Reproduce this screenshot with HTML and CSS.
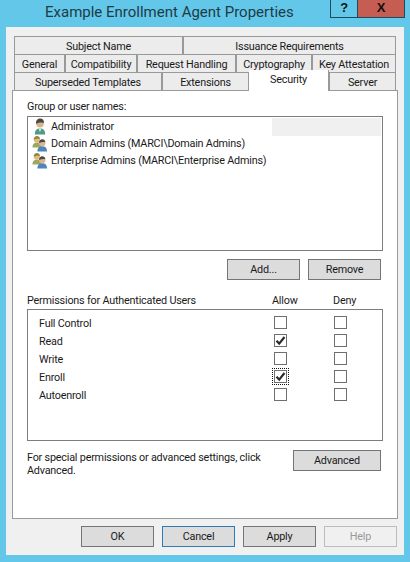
FILE: index.html
```html
<!DOCTYPE html>
<html lang="en">
<head>
<meta charset="utf-8">
<title>Example Enrollment Agent Properties</title>
<link rel="stylesheet" href="styles.css">
</head>
<body>
<svg class="defs" width="0" height="0" aria-hidden="true">
  <defs>
    <symbol id="user" viewBox="0 0 16 18">
      <path d="M2.500 17.500c0-4.500 2-6.500 5.500-6.500s5.500 2 5.500 6.500z" fill="#4e9a86"/>
      <path d="M6.500 11h3L8 15z" fill="#e8e8e0"/>
      <circle cx="8" cy="6" r="4" fill="#d9b38c"/>
      <path d="M3.800 6C3.400 2.500 5.800.6 8.300.6c2.500 0 4.300 1.900 3.900 4.800C10.800 4.300 7 4.600 3.800 6z" fill="#4a4a42"/>
    </symbol>
    <symbol id="group" viewBox="0 0 18 18">
      <path d="M.5 13.500c0-3.700 1.700-5.300 5-5.300s5 1.600 5 5.300z" fill="#9aa860"/>
      <circle cx="5.500" cy="4.800" r="3.500" fill="#e2bb84"/>
      <path d="M2 4.800C1.700 1.900 3.600.5 5.700.5c2 0 3.500 1.500 3.200 3.800C7.700 3.400 5 3.600 2 4.800z" fill="#8f8a3c"/>
      <path d="M6 18c0-3.900 1.900-5.800 5.500-5.800S17 14.100 17 18z" fill="#4f86b8"/>
      <circle cx="11.500" cy="8.500" r="3.600" fill="#e0b48c"/>
      <path d="M8 8.500c-.3-2.900 1.500-4.300 3.600-4.300s3.600 1.500 3.300 3.800c-1.200-.9-3.900-.7-6.900.5z" fill="#4b4a44"/>
    </symbol>
    <symbol id="tick" viewBox="0 0 13 13">
      <path d="M2.500 6.800l2.700 2.800 5.300-6.600" fill="none" stroke="#2a2a2a" stroke-width="2.200"/>
    </symbol>
  </defs>
</svg>
<div class="titlebar">
  <div class="title">Example Enrollment Agent Properties</div>
  <div class="caption">
    <div class="cap-help">?</div>
    <div class="cap-close">X</div>
  </div>
</div>
<main class="window">
  <div class="tabs">
    <div class="tabrow row1">
      <div class="tab">Subject Name</div>
      <div class="tab">Issuance Requirements</div>
    </div>
    <div class="tabrow row2">
      <div class="tab">General</div>
      <div class="tab">Compatibility</div>
      <div class="tab">Request Handling</div>
      <div class="tab">Cryptography</div>
      <div class="tab">Key Attestation</div>
    </div>
    <div class="tabrow row3">
      <div class="tab">Superseded Templates</div>
      <div class="tab">Extensions</div>
      <div class="tab active">Security</div>
      <div class="tab">Server</div>
    </div>
  </div>
  <section class="panel">
    <div class="label">Group or user names:</div>
    <div class="userlist">
      <div class="user">
        <svg class="ico"><use href="#user"/></svg>
        <span>Administrator</span>
        <div class="selected-tail"></div>
      </div>
      <div class="user">
        <svg class="ico"><use href="#group"/></svg>
        <span>Domain Admins (MARCI\Domain Admins)</span>
      </div>
      <div class="user">
        <svg class="ico"><use href="#group"/></svg>
        <span>Enterprise Admins (MARCI\Enterprise Admins)</span>
      </div>
    </div>
    <div class="list-actions">
      <div class="btn">Add...</div>
      <div class="btn">Remove</div>
    </div>
    <div class="perm-head">
      <span class="perm-title">Permissions for Authenticated Users</span>
      <span class="col-head">Allow</span>
      <span class="col-head">Deny</span>
    </div>
    <div class="permlist">
      <div class="perm"><span class="perm-name">Full Control</span><div class="cell"><div class="check"></div></div><div class="cell"><div class="check"></div></div></div>
      <div class="perm"><span class="perm-name">Read</span><div class="cell"><div class="check"><svg class="tick"><use href="#tick"/></svg></div></div><div class="cell"><div class="check"></div></div></div>
      <div class="perm"><span class="perm-name">Write</span><div class="cell"><div class="check"></div></div><div class="cell"><div class="check"></div></div></div>
      <div class="perm"><span class="perm-name">Enroll</span><div class="cell focus"><div class="check"><svg class="tick"><use href="#tick"/></svg></div></div><div class="cell"><div class="check"></div></div></div>
      <div class="perm"><span class="perm-name">Autoenroll</span><div class="cell"><div class="check"></div></div><div class="cell"><div class="check"></div></div></div>
    </div>
    <div class="advanced-row">
      <p class="advanced-text">For special permissions or advanced settings, click Advanced.</p>
      <div class="btn btn-adv">Advanced</div>
    </div>
  </section>
  <div class="footer">
    <div class="btn">OK</div>
    <div class="btn default">Cancel</div>
    <div class="btn">Apply</div>
    <div class="btn disabled">Help</div>
  </div>
</main>
</body>
</html>
```
FILE: styles.css
```css
* { box-sizing: border-box; }
html, body { margin: 0; padding: 0; }
body {
  width: 410px;
  height: 562px;
  overflow: hidden;
  background: #63c7ea;
  font-family: Roboto, Lato, sans-serif;
  font-size: 10.800px;
  letter-spacing: -0.2px;
  color: #1a1a1a;
  padding: 0 6px 7px 6px;
  display: flex;
  flex-direction: column;
}
.defs { position: absolute; }
.titlebar { height: 27px; display: flex; flex: none; }
.title {
  flex: 1;
  padding: 3px 0 0 39px;
  font-size: 15px;
  letter-spacing: 0;
  line-height: 18px;
  color: #1f3b46;
}
.caption { display: flex; height: 18px; margin-right: -1px; border: 1px solid #1e4c5f; border-top: 0; }
.cap-help, .cap-close {
  font-family: "Liberation Sans", sans-serif;
  font-weight: 700;
  color: #111;
  text-align: center;
  font-size: 13px;
  line-height: 15px;
}
.cap-help { width: 27px; border-right: 1px solid #1e4c5f; }
.cap-close { width: 46px; background: #c55d52; }
.window {
  flex: 1;
  background: #f0f0f0;
  padding: 9px 6px 8px 6px;
  display: flex;
  flex-direction: column;
}
.tabs { flex: none; height: 54px; margin: 0 2px; }
.tabrow { display: grid; height: 18px; }
.row1 { grid-template-columns: 169px 213px; }
.row2 { grid-template-columns: 51px 72px 99px 76px 84px; }
.row3 { grid-template-columns: 148px 87px 80px 67px; }
.tab {
  background: #ececec;
  border: 1px solid #999;
  border-bottom: 0;
  text-align: center;
  line-height: 20px;
  white-space: nowrap;
}
.tab.active {
  position: relative;
  z-index: 1;
  background: #fff;
  height: 21px;
  margin-top: -2px;
  line-height: 19px;
  border-top: 0;
  border-left: 0;
}
.panel {
  height: 429px;
  flex: none;
  background: #fff;
  border: 1px solid #9a9a9a;
  padding: 8px 14px 0 14px;
  display: flex;
  flex-direction: column;
}
.label { height: 17px; line-height: 15px; }
.userlist {
  height: 135px;
  border: 1px solid #7d7d7d;
  padding: 1px;
  flex: none;
}
.user { height: 17px; display: flex; align-items: center; white-space: nowrap; line-height: 17px; }
.ico { width: 16px; height: 17px; margin: 0 3px 0 3px; flex: none; }
.selected-tail { margin-left: auto; width: 109px; height: 18px; background: #f0f0f0; }
.list-actions { display: flex; justify-content: flex-end; gap: 8px; margin: 8px 2px 0 0; flex: none; }
.btn {
  width: 73px;
  height: 21px;
  background: #dcdcdc;
  border: 1px solid #757575;
  text-align: center;
  line-height: 19px;
  flex: none;
}
.perm-head { display: flex; margin-top: 12px; height: 17px; line-height: 17px; flex: none; }
.perm-title { width: 245px; flex: none; }
.col-head { width: 61px; flex: none; }
.permlist {
  height: 132px;
  border: 1px solid #7d7d7d;
  padding: 3px 0 0 11px;
  flex: none;
}
.perm { height: 18px; display: flex; align-items: center; }
.perm-name { width: 233px; flex: none; padding-top: 3px; }
.cell { width: 17px; height: 17px; margin-right: 43px; display: flex; align-items: center; justify-content: center; flex: none; }
.cell.focus { outline: 1px dotted #111; outline-offset: -1px; }
.check { width: 13px; height: 13px; border: 1px solid #6f6f6f; background: #fff; position: relative; }
.tick { position: absolute; left: -1px; top: -1px; width: 13px; height: 13px; }
.advanced-row { display: flex; margin-top: 9px; justify-content: space-between; }
.advanced-text { margin: 0; width: 245px; line-height: 13px; padding-top: 1px; }
.btn.btn-adv { width: 88px; margin-right: 2px; line-height: 20px; }
.footer { display: flex; justify-content: flex-end; gap: 8px; margin-top: 7px; flex: none; padding-right: 1px; }
.btn.default { border-color: #2b7cb8; }
.btn.disabled { background: #f0f0f0; border-color: #bcbcbc; color: #9a9a9a; }
```
